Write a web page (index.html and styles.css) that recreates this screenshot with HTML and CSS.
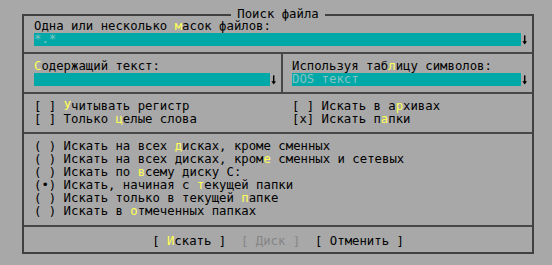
FILE: index.html
```html
<!DOCTYPE html>
<html lang="ru">
<head>
  <meta charset="UTF-8">
  <title>Поиск файла</title>
  <link rel="stylesheet" href="styles.css">
</head>
<body>
  <fieldset class="dialog">
    <legend>Поиск файла</legend>

    <div class="sect first">
      <div class="line">Одна или несколько <span class="hk">м</span>асок файлов:</div>
      <div class="field">
        <span class="edit">*.*</span>
        <svg class="arrow" viewBox="0 0 8 13"><path d="M4 2v8" stroke="#000" stroke-width="1.6"/><path d="M1.5 8.5h5L4 12z" fill="#000"/></svg>
      </div>
    </div>

    <div class="sect cols">
      <div class="col divided">
        <div class="line"><span class="hk">С</span>одержащий текст:</div>
        <div class="field">
          <span class="edit"></span>
          <svg class="arrow" viewBox="0 0 8 13"><path d="M4 2v8" stroke="#000" stroke-width="1.6"/><path d="M1.5 8.5h5L4 12z" fill="#000"/></svg>
        </div>
      </div>
      <div class="col right">
        <div class="line">Используя таб<span class="hk">л</span>ицу символов:</div>
        <div class="field">
          <span class="edit">DOS текст</span>
          <svg class="arrow" viewBox="0 0 8 13"><path d="M4 2v8" stroke="#000" stroke-width="1.6"/><path d="M1.5 8.5h5L4 12z" fill="#000"/></svg>
        </div>
      </div>
    </div>

    <div class="sect cols">
      <div class="col">
        <div class="line">[ ] <span class="hk">У</span>читывать регистр</div>
        <div class="line">[ ] Только <span class="hk">ц</span>елые слова</div>
      </div>
      <div class="col right">
        <div class="line">[ ] Искать в а<span class="hk">р</span>хивах</div>
        <div class="line">[x] Искать п<span class="hk">а</span>пки</div>
      </div>
    </div>

    <div class="sect radios">
      <div class="line">( ) Искать на всех <span class="hk">д</span>исках, кроме сменных</div>
      <div class="line">( ) Искать на всех дисках, кром<span class="hk">е</span> сменных и сетевых</div>
      <div class="line">( ) Искать по <span class="hk">в</span>сему диску C:</div>
      <div class="line">(•) Искать, начиная с <span class="hk">т</span>екущей папки</div>
      <div class="line">( ) Искать только в текущей <span class="hk">п</span>апке</div>
      <div class="line">( ) Искать в <span class="hk">о</span>тмеченных папках</div>
    </div>

    <div class="sect buttons">
      <span class="btn">[ <span class="hk">И</span>скать ]</span>
      <span class="btn off">[ Диск ]</span>
      <span class="btn">[ Отменить ]</span>
    </div>
  </fieldset>
</body>
</html>
```

FILE: styles.css
```css
body {
  margin: 0;
  background: #a8a8a8;
  color: #000;
  font-family: "DejaVu Sans Mono", monospace;
  font-size: 12.3px;
  line-height: 13px;
}
.dialog {
  box-sizing: border-box;
  width: 512px;
  margin: 9px 0 0 22px;
  padding: 0;
  border: 2px solid #404040;
}
.dialog legend {
  margin: 0 auto;
  padding: 0 6px;
  line-height: 11px;
}
.sect {
  padding: 6px 4px 6px 10px;
  border-bottom: 2px solid #484848;
}
.sect.first {
  padding-top: 0;
}
.line {
  height: 13px;
  white-space: pre;
}
.field {
  display: flex;
  height: 13px;
}
.edit {
  flex: 1;
  background: #00a8a8;
  color: #86c2c2;
  white-space: pre;
}
.arrow {
  width: 7.4px;
  height: 13px;
}
.hk {
  color: #ffff55;
}
.cols {
  display: grid;
  grid-template-columns: 259px 1fr;
  padding: 0;
}
.col {
  padding: 6px 4px 6px 10px;
}
.col.divided {
  border-right: 2px solid #484848;
}
.col.right {
  padding-left: 9px;
}
.radios {
  padding-bottom: 7px;
}
.buttons {
  display: flex;
  justify-content: center;
  gap: 14.8px;
  height: 13px;
  padding: 8px 0 4px;
  border-bottom: none;
}
.btn {
  white-space: pre;
}
.btn.off {
  color: #858585;
}
```
